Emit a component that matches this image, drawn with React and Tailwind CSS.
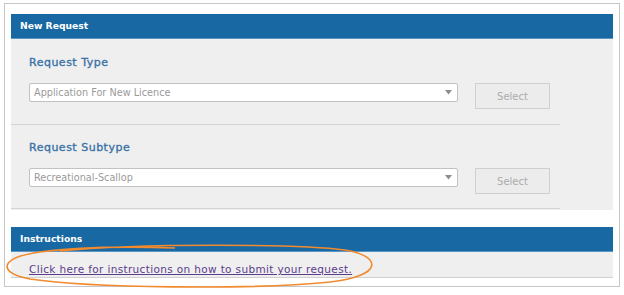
const font = { fontFamily: '"DejaVu Sans", Verdana, sans-serif' };

function Field({ label, value, first }) {
  return (
    <div className={`w-[549px] border-b border-[#d4d4d4] ${first ? 'h-[86px]' : 'h-[84px]'}`}>
      <div className={`pl-[18px] ${first ? 'pt-[17px]' : 'pt-[16px]'}`}>
        <div className="h-[14px] text-[11px] leading-[14px] font-normal tracking-[0.5px] text-[#3a72a6] [-webkit-text-stroke:0.35px_#3a72a6]">{label}</div>
        <div className="mt-[13px] flex items-start">
          <div className="relative h-[19px] w-[429px] rounded-[2px] border border-[#c2c2c2] bg-white pl-[4px] text-[9.7px] leading-[17px] text-[#9a9a9a]">
            {value}
            <svg className="absolute right-[5px] top-[6px]" width="7" height="5" viewBox="0 0 7 5">
              <path d="M0 0 L7 0 L3.5 4.5 Z" fill="#8c8c8c" />
            </svg>
          </div>
          <div className="ml-[17px] flex h-[26px] w-[75px] items-center justify-center border border-[#cfcfcf] bg-[#ececec] text-[10px] text-[#ababab]">
            Select
          </div>
        </div>
      </div>
    </div>
  );
}

export default function App() {
  return (
    <div className="relative h-[295px] w-[624px] bg-white" style={font}>
      <div className="absolute left-[4px] top-[3px] h-[284px] w-[616px] border border-[#c6c6c6] bg-white px-[6px] pt-[10px]">
        {/* New Request header */}
        <div className="flex h-[25px] items-center border-b border-[#5b95c2] bg-[#1768a3] pl-[9px] text-[9.2px] font-bold text-white">
          New Request
        </div>
        <div className="h-[171px] bg-[#efefef]">
          <Field label="Request Type" value="Application For New Licence" first />
          <Field label="Request Subtype" value="Recreational-Scallop" />
        </div>

        {/* Instructions */}
        <div className="mt-[17px] flex h-[25px] items-center border-b border-[#5b95c2] bg-[#1768a3] pl-[9px] text-[9.2px] font-bold text-white">
          Instructions
        </div>
        <div className="h-[26px] border-b border-[#d0d0d0] bg-[#efefef] pl-[18px] pt-[4px]">
          <a href="#" className="text-[10.5px] leading-[12px] tracking-[0.35px] text-[#5b3d8c] underline">
            Click here for instructions on how to submit your request.
          </a>
        </div>
      </div>

      {/* hand-drawn highlight ellipse */}
      <svg className="pointer-events-none absolute left-0 top-0" width="624" height="295" viewBox="0 0 624 295">
        <path
          d="M60 251 C140 243 300 244 345 250 C382 256 384 276 330 282 C250 290 90 288 30 279 C-2 273 -2 258 40 252 C70 248 120 246 175 248"
          fill="none"
          stroke="#f28a2e"
          strokeWidth="1.6"
        />
      </svg>
    </div>
  );
}
